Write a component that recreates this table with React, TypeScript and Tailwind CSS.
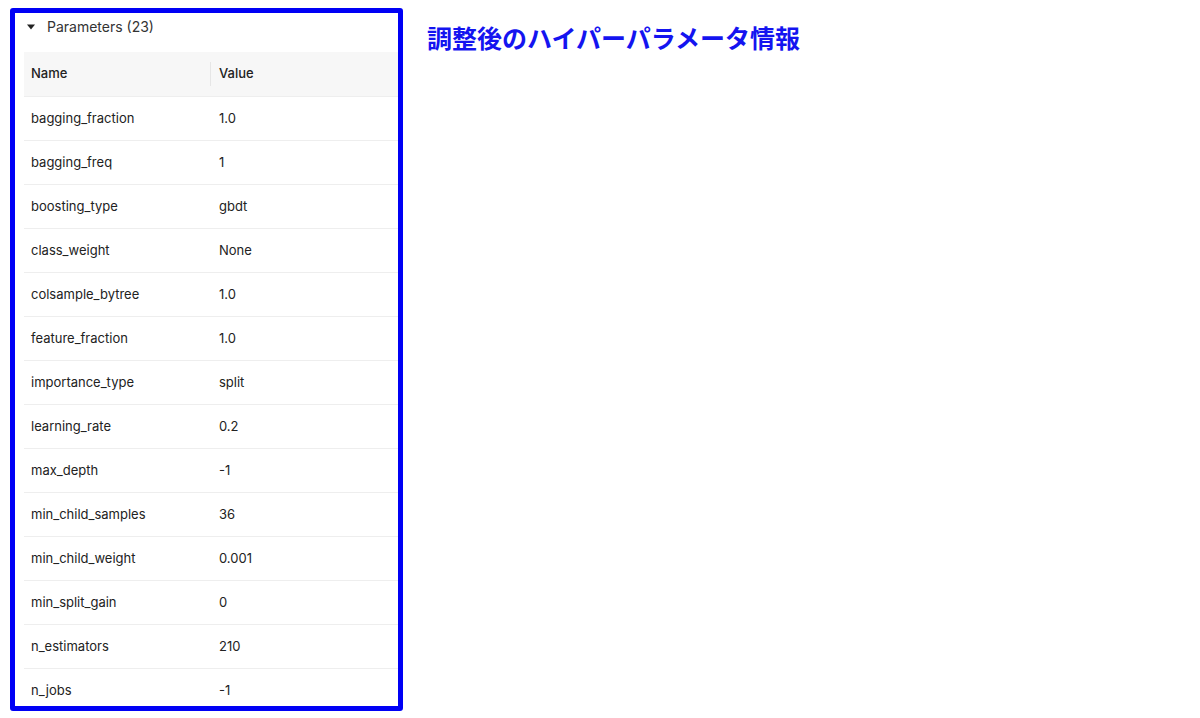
import React from "react";

// Tuned hyperparameters panel with a caption to its right.

type Param = { name: string; value: string };

const PARAMS: Param[] = [
  { name: "bagging_fraction", value: "1.0" },
  { name: "bagging_freq", value: "1" },
  { name: "boosting_type", value: "gbdt" },
  { name: "class_weight", value: "None" },
  { name: "colsample_bytree", value: "1.0" },
  { name: "feature_fraction", value: "1.0" },
  { name: "importance_type", value: "split" },
  { name: "learning_rate", value: "0.2" },
  { name: "max_depth", value: "-1" },
  { name: "min_child_samples", value: "36" },
  { name: "min_child_weight", value: "0.001" },
  { name: "min_split_gain", value: "0" },
  { name: "n_estimators", value: "210" },
  { name: "n_jobs", value: "-1" },
];

export default function App() {
  return (
    <div
      className="flex h-[718px] w-[1200px] items-start bg-white"
      style={{ fontFamily: "Inter, 'Liberation Sans', 'Noto Sans CJK JP', sans-serif" }}
    >
      <div className="ml-[10px] mt-[8px] h-[703px] w-[393px] shrink-0 overflow-hidden rounded-[3px] border-[5px] border-[#0000f5] bg-white">
        <div className="flex h-[39px] items-start pl-[12px] pt-[4px] text-[14px] leading-[20px] text-[#333]">
          <svg width="8" height="20" viewBox="0 0 8 20" className="mr-[12px]">
            <path d="M0 7.5 L8 7.5 L4 12.5 Z" fill="#222" />
          </svg>
          <span>Parameters (23)</span>
        </div>
        <div className="ml-[9px] text-[13px] text-[#222]">
          <div className="flex h-[44px] items-center bg-[#f7f7f7] font-medium">
            <div className="relative flex h-full w-[187px] items-center pl-[7px]">
              Name
              <span className="absolute right-0 top-[10px] h-[24px] w-px bg-[#e6e6e6]" />
            </div>
            <div className="pl-[8px]">Value</div>
          </div>
          {PARAMS.map((p) => (
            <div key={p.name} className="flex h-[44px] items-center border-t border-[#eeeeee]">
              <div className="w-[187px] pl-[7px]">{p.name}</div>
              <div className="pl-[8px]">{p.value}</div>
            </div>
          ))}
        </div>
      </div>
      <h1 className="ml-[24px] mt-[25px] text-[25px] font-bold leading-[28px] text-[#1414f0]">
        調整後のハイパーパラメータ情報
      </h1>
    </div>
  );
}
